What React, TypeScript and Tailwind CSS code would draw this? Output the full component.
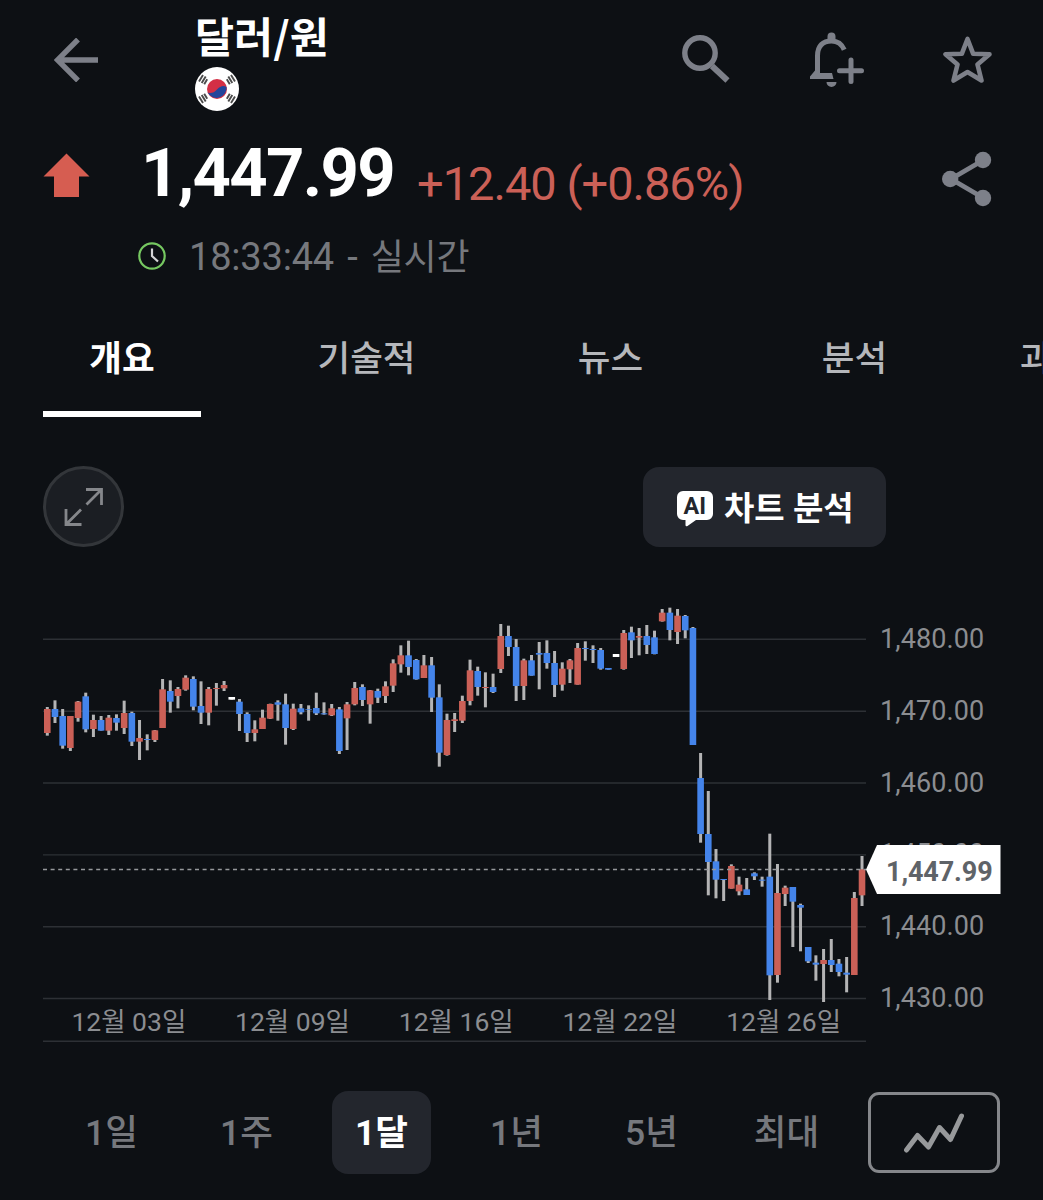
type Candle = [kind: "r" | "b" | "w", high: number, top: number, bottom: number, low: number];

// offsets from the top of the plot, in thirds of a pixel
const candles: Candle[] = [
  ["r", 321, 327, 399, 407],
  ["b", 301, 327, 351, 369],
  ["b", 327, 348, 437, 446],
  ["r", 348, 348, 444, 453],
  ["r", 303, 305, 354, 365],
  ["b", 278, 289, 388, 397],
  ["r", 344, 360, 387, 411],
  ["b", 348, 360, 392, 392],
  ["r", 345, 353, 392, 405],
  ["b", 343, 354, 368, 392],
  ["r", 302, 339, 384, 402],
  ["b", 335, 339, 425, 438],
  ["r", 360, 414, 425, 480],
  ["b", 403, 417, 420, 451],
  ["r", 390, 391, 420, 426],
  ["r", 237, 268, 384, 384],
  ["b", 241, 273, 305, 338],
  ["r", 261, 267, 288, 325],
  ["r", 226, 233, 269, 272],
  ["b", 229, 237, 320, 331],
  ["b", 244, 318, 338, 372],
  ["r", 261, 267, 338, 376],
  ["r", 249, 264, 267, 317],
  ["r", 243, 255, 265, 273],
  ["w", 291, 291, 299, 299],
  ["b", 297, 305, 342, 393],
  ["b", 337, 342, 399, 426],
  ["r", 361, 388, 399, 424],
  ["r", 329, 353, 387, 387],
  ["r", 311, 312, 356, 357],
  ["b", 301, 307, 314, 362],
  ["b", 281, 313, 384, 434],
  ["r", 311, 326, 387, 390],
  ["b", 312, 325, 337, 343],
  ["b", 316, 327, 329, 362],
  ["b", 278, 324, 340, 345],
  ["b", 307, 340, 343, 344],
  ["r", 312, 325, 346, 348],
  ["b", 321, 328, 453, 462],
  ["r", 306, 313, 355, 450],
  ["r", 246, 264, 313, 316],
  ["b", 253, 261, 300, 318],
  ["r", 270, 271, 313, 371],
  ["b", 266, 273, 293, 309],
  ["r", 244, 259, 288, 309],
  ["r", 178, 190, 257, 276],
  ["r", 136, 166, 193, 218],
  ["b", 122, 166, 201, 226],
  ["b", 177, 180, 238, 239],
  ["r", 165, 196, 234, 234],
  ["b", 171, 196, 293, 336],
  ["b", 253, 292, 458, 500],
  ["r", 341, 360, 465, 467],
  ["r", 339, 358, 363, 396],
  ["r", 287, 303, 362, 369],
  ["r", 179, 211, 303, 316],
  ["b", 200, 213, 261, 287],
  ["r", 217, 261, 264, 322],
  ["b", 221, 261, 276, 279],
  ["r", 72, 108, 207, 219],
  ["b", 77, 108, 141, 168],
  ["b", 117, 141, 258, 303],
  ["r", 176, 181, 258, 300],
  ["b", 165, 181, 227, 227],
  ["b", 126, 159, 164, 268],
  ["b", 121, 159, 189, 206],
  ["b", 153, 189, 255, 291],
  ["r", 187, 206, 254, 272],
  ["r", 177, 181, 208, 249],
  ["r", 129, 144, 254, 254],
  ["b", 124, 144, 147, 182],
  ["b", 136, 147, 150, 189],
  ["b", 144, 150, 206, 209],
  ["b", 204, 204, 209, 209],
  ["w", 162, 162, 171, 171],
  ["r", 90, 99, 207, 209],
  ["b", 80, 97, 121, 174],
  ["r", 84, 108, 113, 166],
  ["b", 75, 108, 135, 162],
  ["b", 92, 112, 162, 163],
  ["r", 27, 38, 64, 65],
  ["b", 23, 38, 90, 121],
  ["r", 27, 47, 96, 132],
  ["b", 45, 48, 91, 115],
  ["b", 81, 84, 435, 435],
  ["b", 459, 534, 702, 728],
  ["b", 573, 702, 786, 886],
  ["b", 747, 784, 839, 895],
  ["b", 837, 837, 840, 903],
  ["r", 793, 798, 866, 866],
  ["r", 830, 854, 874, 886],
  ["b", 834, 868, 885, 885],
  ["b", 817, 820, 829, 840],
  ["b", 830, 839, 842, 860],
  ["b", 701, 830, 1126, 1200],
  ["r", 792, 879, 1125, 1148],
  ["r", 857, 863, 882, 918],
  ["b", 861, 861, 905, 1041],
  ["b", 911, 915, 923, 1054],
  ["b", 1041, 1041, 1084, 1089],
  ["b", 1066, 1088, 1094, 1142],
  ["r", 1047, 1080, 1092, 1206],
  ["b", 1017, 1080, 1095, 1116],
  ["b", 1077, 1091, 1116, 1129],
  ["b", 1071, 1118, 1124, 1177],
  ["r", 876, 894, 1125, 1125],
  ["r", 768, 808, 886, 918],
];

const fills = { r: "#cb6057", b: "#4484ea", w: "#ffffff" };

const gridLines = [39.3, 111.2, 183, 254.9, 326.8, 398.5, 441.2];

const prices = ["1,480.00", "1,470.00", "1,460.00", "1,450.00", "1,440.00", "1,430.00"];
const dates = ["12월 03일", "12월 09일", "12월 16일", "12월 22일", "12월 26일"];
const ranges = ["1일", "1주", "1달", "1년", "5년", "최대"];

function CandleChart() {
  return (
    <svg width="823" height="443" viewBox="0 0 823 443" className="block">
      {gridLines.map((y) => (
        <line key={y} x1="0" x2="823" y1={y} y2={y} stroke="#2d3035" strokeWidth="1.4" />
      ))}
      {candles.map(([kind, high, top, bottom, low], i) => {
        const x = 4.3 + i * 7.686;
        return (
          <g key={i}>
            <rect x={x - 1.5} y={high / 3} width="3" height={(low - high) / 3} fill="#b4b4b5" />
            <rect x={x - 3.3} y={top / 3} width="6.6" height={(bottom - top) / 3} fill={fills[kind]} />
          </g>
        );
      })}
      <line x1="0" x2="823" y1="269.4" y2="269.4" stroke="#96989b" strokeWidth="1.5" strokeDasharray="4 3.6" />
    </svg>
  );
}

function BackIcon() {
  return (
    <svg width="44" height="44" viewBox="0 0 44 44" fill="none" stroke="#7d8089" strokeWidth="5.4">
      <path d="M44 22H4M24 1.5 3.5 22 24 42.5" />
    </svg>
  );
}

function FlagIcon() {
  return (
    <svg width="44" height="44" viewBox="0 0 44 44">
      <circle cx="22" cy="22" r="22" fill="#fff" />
      <circle cx="22" cy="22" r="10" fill="#d32f45" />
      <path d="M12.6 25.2C15 27 19 26 22 22.5s6.5-4.5 9.6-2.5A10 10 0 0 1 12.6 25.2z" fill="#22459b" />
      <g stroke="#4b4b4b" strokeWidth="1.9">
        <path d="M4 14.5l4-6.5M6.7 16l4-6.5M9.2 17.3l3-5" />
        <path d="M40 14.5l-4-6.5M37.3 16l-4-6.5M34.8 17.3l-3-5" />
        <path d="M4 29.5l4 6.5M6.7 28l4 6.5M9.2 26.7l3 5" />
        <path d="M40 29.5l-4 6.5M37.3 28l-4 6.5M34.8 26.7l-3 5" />
      </g>
    </svg>
  );
}

function SearchIcon() {
  return (
    <svg width="50" height="50" viewBox="0 0 50 50" fill="none" stroke="#7d8089">
      <circle cx="18" cy="18" r="15.2" strokeWidth="5.4" />
      <path d="M30 31l15.5 14.5" strokeWidth="6" />
    </svg>
  );
}

function BellPlusIcon() {
  return (
    <svg width="56" height="56" viewBox="0 0 56 56" fill="none" stroke="#7d8089" strokeWidth="5">
      <path d="M7.5 43V24C7.5 13.5 13 9 21.5 9c6.5 0 10.5 3.5 12.7 8.8" />
      <path d="M0 47v-2.5L5 38.500v2.5h17l1.5 6z" fill="#7d8089" stroke="none" />
      <path d="M17.5 8V4.5a4 4 0 0 1 8 0V8zM16.5 50h10a5 5 0 0 1-10 0z" fill="#7d8089" stroke="none" />
      <path d="M41 28v21.5M29.5 38.7h22" strokeLinecap="round" />
    </svg>
  );
}

function StarIcon() {
  return (
    <svg width="50" height="50" viewBox="0 0 50 50" fill="none" stroke="#7d8089" strokeWidth="4.6" strokeLinejoin="round">
      <path d="M24.5 4 30.2 18.8 46.5 19.3 34.5 29.5 38.5 45.5 24.5 37 10.5 45.5 14.5 29.5 2.5 19.3 18.8 18.8z" />
    </svg>
  );
}

function ShareIcon() {
  return (
    <svg width="50" height="56" viewBox="0 0 50 56" fill="#7d8089">
      <path d="M41.5 9 9 28l32.5 19" fill="none" stroke="#7d8089" strokeWidth="4.8" />
      <circle cx="41" cy="9" r="8.2" />
      <circle cx="8.2" cy="28" r="8.2" />
      <circle cx="41" cy="47" r="8.2" />
    </svg>
  );
}

function Header() {
  return (
    <header className="flex h-[135px] items-start">
      <div className="w-[195px] pt-[38px] pl-[54px]">
        <BackIcon />
      </div>
      <div className="w-[487px]">
        <h1 className="h-[67px] pt-[5px] font-['Noto_Sans_CJK_KR',sans-serif] text-[42.5px] leading-[60px] font-bold whitespace-nowrap text-white">달러/원</h1>
        <FlagIcon />
      </div>
      <div className="w-[128px] pt-[35px]">
        <SearchIcon />
      </div>
      <div className="w-[133px] pt-[32px]">
        <BellPlusIcon />
      </div>
      <div className="pt-[35px]">
        <StarIcon />
      </div>
    </header>
  );
}

function Quote() {
  return (
    <section className="flex h-[185px]">
      <div className="w-[138px] pt-[18px] pl-[43px]">
        <svg width="47" height="44" viewBox="0 0 47 44" fill="#d65d51">
          <path d="M23.5 .5 46.5 23.5H36V44H11V23.5H.5z" />
        </svg>
      </div>
      <div className="w-[804px]">
        <div className="flex h-[90px] items-start whitespace-nowrap">
          <span className="w-[279px] pl-[3px] text-[67px] leading-[77px] font-bold tracking-[-1.7px] text-white">1,447.99</span>
          <span className="pt-[10px] text-[47px] leading-[78px] tracking-[-1px] text-[#cb6057]">+12.40 (+0.86%)</span>
        </div>
        <div className="flex h-[62px] items-center">
          <svg width="28" height="28" viewBox="0 0 28 28" fill="none">
            <circle cx="14" cy="14" r="12.7" stroke="#76c861" strokeWidth="2.2" />
            <path d="M14 6.5V14l6 5.5" stroke="#d5d5d7" strokeWidth="2.2" />
          </svg>
          <span className="ml-[23px] pt-[2px] text-[38px] leading-[62px] tracking-[-0.2px] whitespace-nowrap text-[#76787d] [word-spacing:4px]">
            18:33:44 - <span className="text-[36px]">실시간</span>
          </span>
        </div>
      </div>
      <div className="pt-[16px]">
        <ShareIcon />
      </div>
    </section>
  );
}

function Tabs() {
  return (
    <nav className="flex h-[97px] overflow-hidden pl-[43px] text-[35.5px] leading-[79px] font-medium whitespace-nowrap text-[#b5b7bb]">
      <div className="w-[158px] shrink-0 border-b-[6px] border-white text-center font-bold text-white">개요</div>
      <div className="w-[331px] shrink-0 text-center">기술적</div>
      <div className="w-[157px] shrink-0 text-center">뉴스</div>
      <div className="w-[331px] shrink-0 text-center">분석</div>
      <div className="w-[80px] shrink-0">과거</div>
    </nav>
  );
}

function ChartTools() {
  return (
    <div className="flex h-[183px] items-start justify-between pt-[49px] pr-[157px] pl-[43px]">
      <button className="flex h-[81px] w-[81px] items-center justify-center rounded-full border-[3px] border-[#33363a] bg-[#1b1e23]">
        <svg width="40" height="40" viewBox="0 0 40 40" fill="none" stroke="#85878b" strokeWidth="2.8">
          <path d="M22 2.5h15.5V18M37 3 22.5 17.5M17.5 37.5H2V22M2.5 37 17 22.5" />
        </svg>
      </button>
      <button className="mt-[1px] flex h-[80px] w-[243px] items-center rounded-[16px] bg-[#23262d] pt-[4px] pl-[34px]">
        <svg width="36" height="36" viewBox="0 0 36 36">
          <path d="M6 0h24a6 6 0 0 1 6 6v17a6 6 0 0 1-6 6H19l-8.5 6q-2 .8-2-1V29H6a6 6 0 0 1-6-6V6a6 6 0 0 1 6-6z" fill="#fff" />
          <text x="6.5" y="23" fontSize="24" fontWeight="700" textLength="22.5" lengthAdjust="spacingAndGlyphs" fill="#23262d">AI</text>
        </svg>
        <span className="ml-[11px] text-[33px] leading-[60px] font-bold whitespace-nowrap text-white">차트 분석</span>
      </button>
    </div>
  );
}

function ChartSection() {
  return (
    <section className="flex h-[443px] pl-[43px]">
      <div className="relative w-[823px]">
        <CandleChart />
        <div className="absolute top-[400px] left-[4px] flex text-[26.5px] leading-[44px] text-[#8b8d91]">
          {dates.map((d) => (
            <span key={d} className="w-[163.7px] text-center whitespace-nowrap">{d}</span>
          ))}
        </div>
      </div>
      <div className="relative pt-[4px] pl-[14px]">
        {prices.map((p) => (
          <div key={p} className="h-[71.8px] text-[27px] leading-[71.8px] tracking-[0.1px] text-[#8b8d91]">{p}</div>
        ))}
        <div className="absolute top-[245px] left-0 h-[49px] w-[134.5px] bg-white pl-[20px] text-[27px] leading-[55px] font-bold tracking-[-0.1px] text-[#5f6368] [clip-path:polygon(11px_0,100%_0,100%_100%,11px_100%,0_50%)]">
          1,447.99
        </div>
      </div>
    </section>
  );
}

function RangeBar() {
  return (
    <div className="flex h-[157px] items-start pt-[48px] pl-[44px] text-[35.5px] font-medium text-[#76787d]">
      {ranges.map((r) => (
        <div key={r} className="flex w-[135px] justify-center">
          <span
            className={
              r === "1달"
                ? "flex h-[83px] w-[99px] items-center justify-center rounded-[16px] bg-[#23262d] pt-[2px] font-bold text-white"
                : "flex h-[83px] items-center pt-[2px]"
            }
          >
            {r}
          </span>
        </div>
      ))}
      <button className="mt-[1px] ml-[14px] flex h-[81px] w-[132px] items-center justify-center rounded-[11px] border-[3px] border-[#85878b]">
        <svg width="60" height="40" viewBox="0 0 60 40" fill="none" stroke="#97999b" strokeWidth="5" strokeLinecap="round" strokeLinejoin="round">
          <path d="M2.5 37 13.5 22.5 24.5 34 35.5 14.5 46.5 26.5 57.5 3" />
        </svg>
      </button>
    </div>
  );
}

export default function App() {
  return (
    <div className="h-[1200px] w-[1043px] overflow-hidden bg-[#0d1014] font-['Roboto','Noto_Sans_CJK_KR',sans-serif]">
      <Header />
      <Quote />
      <Tabs />
      <ChartTools />
      <ChartSection />
      <RangeBar />
    </div>
  );
}
